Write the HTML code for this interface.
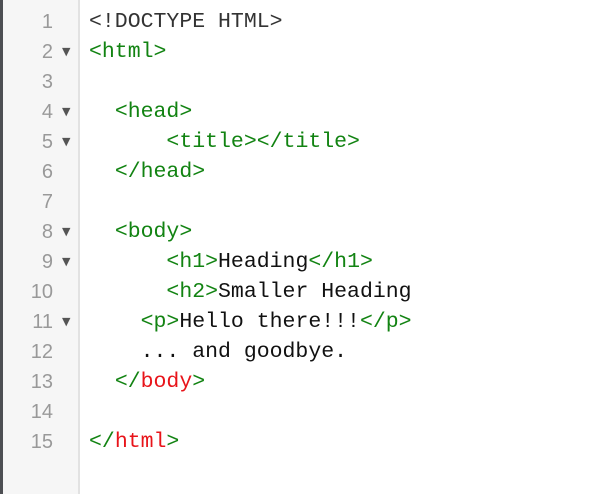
<!DOCTYPE html>
<html><head><style>
body{margin:0;width:596px;height:494px;background:#fff;position:relative;overflow:hidden}
.strip{position:absolute;left:0;top:0;width:3px;height:494px;background:#4d4f53}
.gut{position:absolute;left:3px;top:0;width:75px;height:494px;background:#f6f6f6;border-right:2px solid #e2e2e2}
.ln{position:absolute;left:0;width:53px;text-align:right;font:20px "Liberation Sans",sans-serif;color:#999;line-height:30px}
.ar{position:absolute;left:62px;font:11px "DejaVu Sans",sans-serif;color:#555;line-height:30px}
.code{position:absolute;left:89px;top:7px;font:21.5px "Liberation Mono",monospace;line-height:30px;white-space:pre;color:#111}
.g{color:#128312}.r{color:#e8141a}.d{color:#333}
</style></head><body>
<div class="strip"></div><div class="gut"></div>
<div class="ln" style="top:7px">1<br>2<br>3<br>4<br>5<br>6<br>7<br>8<br>9<br>10<br>11<br>12<br>13<br>14<br>15</div>
<div class="ar" style="top:37px">▼</div>
<div class="ar" style="top:97px">▼</div>
<div class="ar" style="top:127px">▼</div>
<div class="ar" style="top:217px">▼</div>
<div class="ar" style="top:247px">▼</div>
<div class="ar" style="top:307px">▼</div>
<div class="code"><span class="d">&lt;!DOCTYPE HTML&gt;</span>
<span class="g">&lt;html&gt;</span>

  <span class="g">&lt;head&gt;</span>
      <span class="g">&lt;title&gt;&lt;/title&gt;</span>
  <span class="g">&lt;/head&gt;</span>

  <span class="g">&lt;body&gt;</span>
      <span class="g">&lt;h1&gt;</span>Heading<span class="g">&lt;/h1&gt;</span>
      <span class="g">&lt;h2&gt;</span>Smaller Heading
    <span class="g">&lt;p&gt;</span>Hello there!!!<span class="g">&lt;/p&gt;</span>
    ... and goodbye.
  <span class="g">&lt;/</span><span class="r">body</span><span class="g">&gt;</span>

<span class="g">&lt;/</span><span class="r">html</span><span class="g">&gt;</span></div>
</body></html>
